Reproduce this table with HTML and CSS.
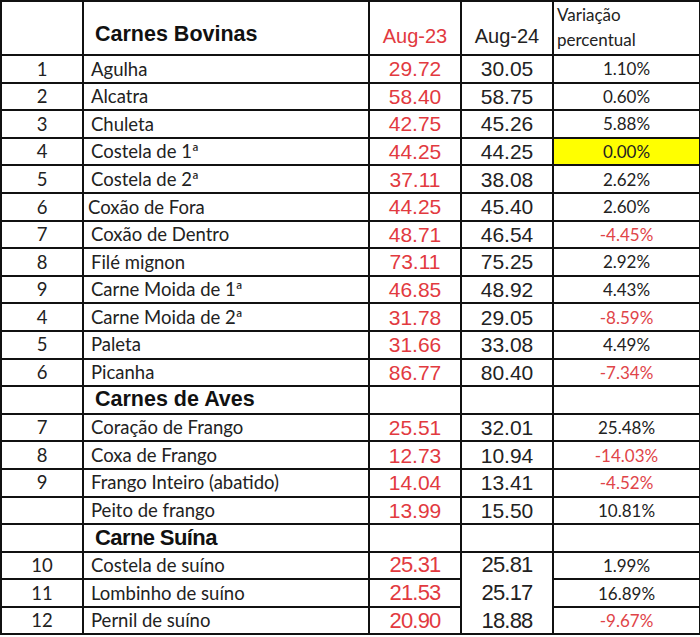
FILE: index.html
```html
<!DOCTYPE html>
<html lang="pt">
<head>
<meta charset="utf-8">
<title>Preços de carnes</title>
<link rel="stylesheet" href="styles.css">
</head>
<body>
<table class="sheet">
  <colgroup>
    <col class="c-num"><col class="c-name"><col class="c-a"><col class="c-b"><col class="c-v">
  </colgroup>
  <thead>
    <tr class="head">
      <th></th>
      <th class="sec">Carnes Bovinas</th>
      <th class="y23">Aug-23</th>
      <th class="y24">Aug-24</th>
      <th class="var">Variação<br>percentual</th>
    </tr>
  </thead>
  <tbody>
    <tr><td class="n">1</td><td class="name">Agulha</td><td class="a">29.72</td><td class="b">30.05</td><td class="v">1.10%</td></tr>
    <tr><td class="n">2</td><td class="name">Alcatra</td><td class="a">58.40</td><td class="b">58.75</td><td class="v">0.60%</td></tr>
    <tr><td class="n">3</td><td class="name">Chuleta</td><td class="a">42.75</td><td class="b">45.26</td><td class="v">5.88%</td></tr>
    <tr><td class="n">4</td><td class="name">Costela de 1ª</td><td class="a">44.25</td><td class="b">44.25</td><td class="v hl">0.00%</td></tr>
    <tr><td class="n">5</td><td class="name">Costela de 2ª</td><td class="a">37.11</td><td class="b">38.08</td><td class="v">2.62%</td></tr>
    <tr><td class="n">6</td><td class="name tight">Coxão de Fora</td><td class="a">44.25</td><td class="b">45.40</td><td class="v">2.60%</td></tr>
    <tr><td class="n">7</td><td class="name">Coxão de Dentro</td><td class="a">48.71</td><td class="b">46.54</td><td class="v neg">-4.45%</td></tr>
    <tr><td class="n">8</td><td class="name">Filé mignon</td><td class="a">73.11</td><td class="b">75.25</td><td class="v">2.92%</td></tr>
    <tr><td class="n">9</td><td class="name">Carne Moida de 1ª</td><td class="a">46.85</td><td class="b">48.92</td><td class="v">4.43%</td></tr>
    <tr><td class="n">4</td><td class="name">Carne Moida de 2ª</td><td class="a">31.78</td><td class="b">29.05</td><td class="v neg">-8.59%</td></tr>
    <tr><td class="n">5</td><td class="name">Paleta</td><td class="a">31.66</td><td class="b">33.08</td><td class="v">4.49%</td></tr>
    <tr><td class="n">6</td><td class="name">Picanha</td><td class="a">86.77</td><td class="b">80.40</td><td class="v neg">-7.34%</td></tr>
    <tr class="group"><td></td><td class="sec">Carnes de Aves</td><td></td><td></td><td></td></tr>
    <tr><td class="n">7</td><td class="name">Coração de Frango</td><td class="a">25.51</td><td class="b">32.01</td><td class="v">25.48%</td></tr>
    <tr><td class="n">8</td><td class="name">Coxa de Frango</td><td class="a">12.73</td><td class="b">10.94</td><td class="v neg">-14.03%</td></tr>
    <tr><td class="n">9</td><td class="name">Frango Inteiro (abatido)</td><td class="a">14.04</td><td class="b">13.41</td><td class="v neg">-4.52%</td></tr>
    <tr><td class="n"></td><td class="name">Peito de frango</td><td class="a">13.99</td><td class="b">15.50</td><td class="v">10.81%</td></tr>
    <tr class="group"><td></td><td class="sec narrow">Carne Suína</td><td></td><td></td><td></td></tr>
    <tr class="pork"><td class="n">10</td><td class="name">Costela de suíno</td><td class="a">25.31</td><td class="b open-b">25.81</td><td class="v">1.99%</td></tr>
    <tr class="pork"><td class="n">11</td><td class="name">Lombinho de suíno</td><td class="a">21.53</td><td class="b open-t open-b">25.17</td><td class="v">16.89%</td></tr>
    <tr class="pork"><td class="n">12</td><td class="name">Pernil de suíno</td><td class="a">20.90</td><td class="b open-t">18.88</td><td class="v neg">-9.67%</td></tr>
  </tbody>
</table>
</body>
</html>
```

FILE: styles.css
```css
html, body {
  margin: 0;
  padding: 0;
  background: #ffffff;
}

.sheet {
  border-collapse: collapse;
  table-layout: fixed;
  width: 699px;
  color: #222222;
  font-family: "Lato", "Liberation Sans", sans-serif;
}

.c-num { width: 82px; }
.c-name { width: 286px; }
.c-a { width: 92px; }
.c-b { width: 92px; }
.c-v { width: 147px; }

.sheet th,
.sheet td {
  border: 2px solid #111111;
  padding: 0;
  height: 25.6px;
  line-height: 1;
  overflow: hidden;
  white-space: nowrap;
}

.head th {
  height: 43px;
  vertical-align: bottom;
  padding-bottom: 0;
  font-weight: normal;
  text-align: left;
}

.head .sec {
  font-family: "Liberation Sans", Arial, sans-serif;
  font-weight: bold;
  font-size: 21.5px;
  padding-left: 11px;
  padding-bottom: 9px;
  color: #111111;
}

.head .y23,
.head .y24 {
  font-family: "Liberation Sans", Arial, sans-serif;
  font-size: 20px;
  text-align: center;
  padding-bottom: 8px;
}

.head .y23 { color: #e23a3f; }

.head .var {
  font-size: 17px;
  line-height: 25px;
  padding-left: 3px;
  padding-bottom: 2px;
}

.n {
  text-align: center;
  font-size: 18.5px;
}

.name {
  font-size: 18.5px;
  padding-left: 7px !important;
}

.name.tight { padding-left: 4px !important; }

.a,
.b {
  font-family: "Liberation Sans", Arial, sans-serif;
  font-size: 21px;
  text-align: center;
}

.a { color: #e23a3f; }

.v {
  font-size: 17px;
  text-align: center;
}

.v.neg { color: #e04448; }

.v.hl { background: #ffff00; }

.group .sec {
  font-family: "Liberation Sans", Arial, sans-serif;
  font-weight: bold;
  font-size: 21.5px;
  padding-left: 11px;
  color: #111111;
}

.group .sec.narrow {
  font-size: 22px;
  letter-spacing: -0.6px;
}

.pork .a,
.pork .b {
  font-size: 22px;
  letter-spacing: -0.8px;
}

.open-b { border-bottom-color: transparent !important; }
.open-t { border-top-color: transparent !important; }
```
